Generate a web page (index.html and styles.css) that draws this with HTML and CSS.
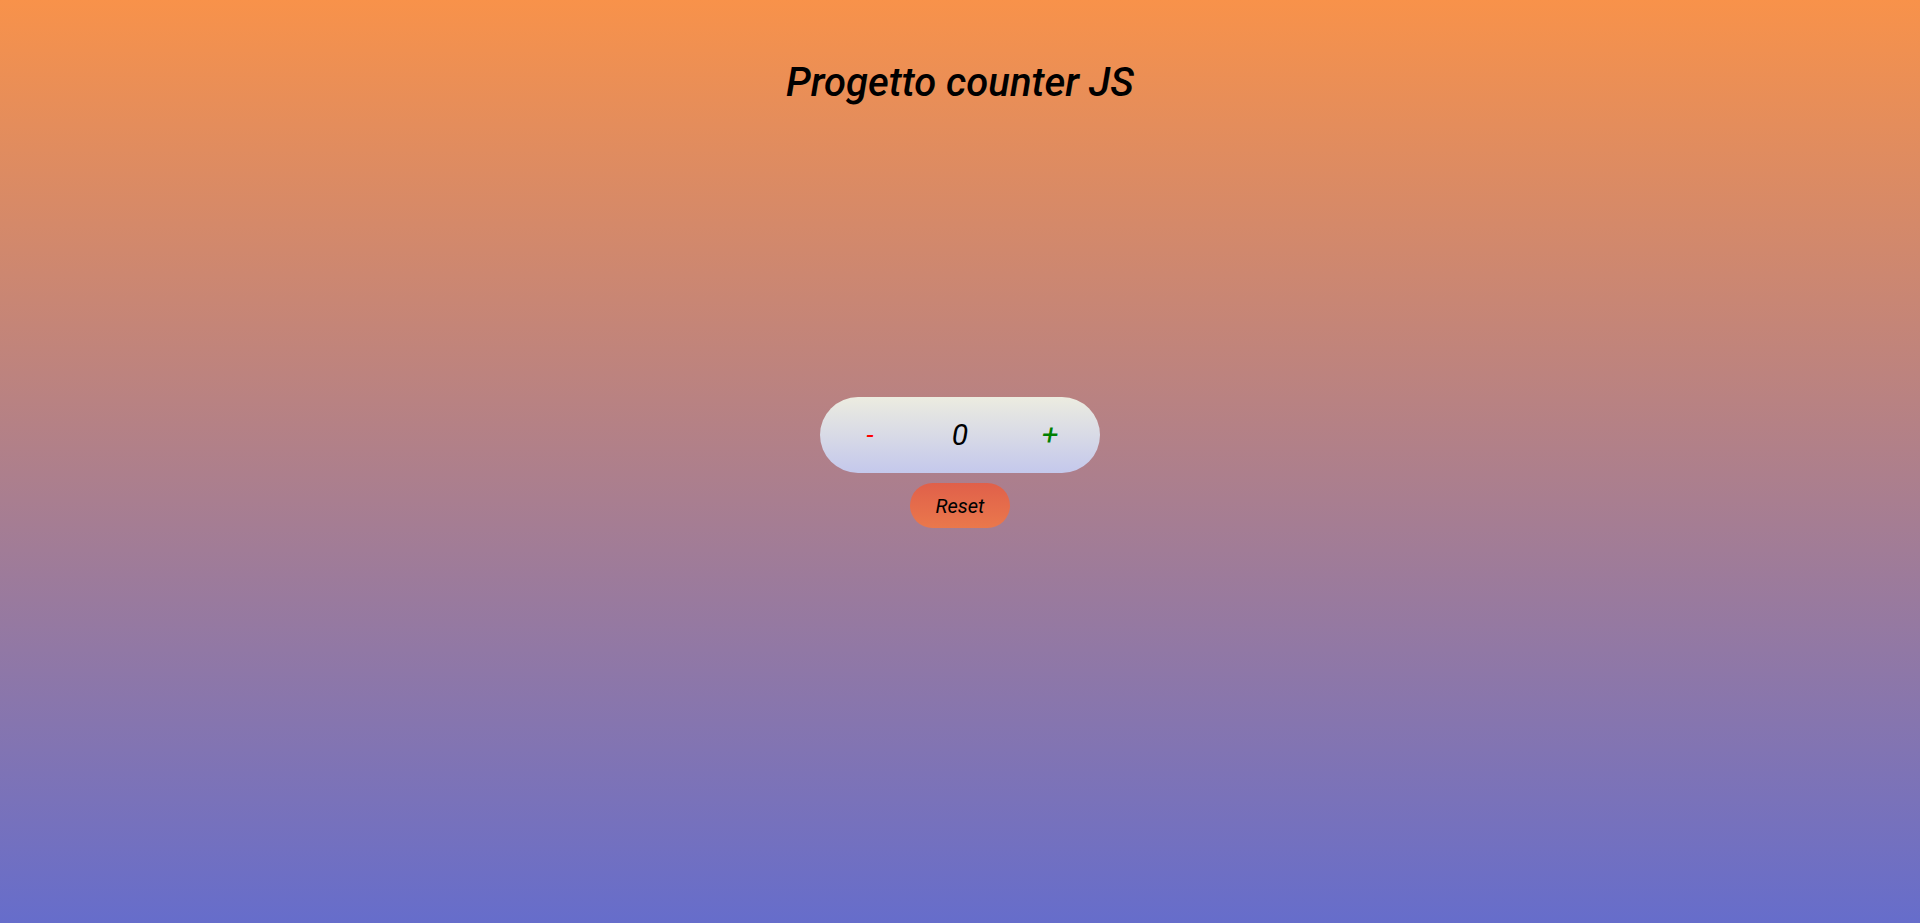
FILE: index.html
```html
<!DOCTYPE html>
<html lang="it">
<head>
<meta charset="utf-8">
<title>Progetto counter JS</title>
<link rel="stylesheet" href="styles.css">
</head>
<body>
<div class="page">
  <header class="top">
    <h1 class="title">Progetto counter JS</h1>
  </header>
  <main class="center">
    <div class="counter">
      <button class="btn minus">-</button>
      <span class="value">0</span>
      <button class="btn plus">+</button>
    </div>
    <button class="reset">Reset</button>
  </main>
  <div class="bottom"></div>
</div>
</body>
</html>
```
FILE: styles.css
```css
html, body {
  margin: 0;
  padding: 0;
  height: 100%;
}
body {
  background: linear-gradient(to bottom, #f8924a 0%, #666dcb 100%);
  font-family: Roboto, "Liberation Sans", sans-serif;
  font-style: italic;
  color: #000;
}
.page {
  height: 100vh;
  display: grid;
  grid-template-rows: 1fr auto 1fr;
}
.top {
  display: flex;
  justify-content: center;
  align-items: flex-start;
}
.title {
  margin: 59px 0 0;
  font-size: 40px;
  font-weight: 500;
  font-style: italic;
  line-height: 47px;
}
.center {
  display: flex;
  flex-direction: column;
  align-items: center;
  gap: 10px;
  padding-top: 2px;
}
.counter {
  width: 280px;
  height: 76px;
  box-sizing: border-box;
  border-radius: 38px;
  background: linear-gradient(to bottom, #ecece0 0%, #c4c8ec 100%);
  display: grid;
  grid-template-columns: 90px 90px 90px;
  padding: 0 5px;
  align-items: center;
  justify-items: center;
}
.btn {
  border: none;
  background: none;
  padding: 0;
  font-family: Roboto, "Liberation Sans", sans-serif;
  font-style: italic;
  font-size: 30px;
  line-height: 1;
  cursor: pointer;
}
.minus { color: #ff0000; font-size: 26px; }
.plus { color: #008000; }
.value {
  font-size: 30px;
  line-height: 1;
}
.reset {
  width: 100px;
  height: 45px;
  border: none;
  border-radius: 23px;
  background: linear-gradient(to bottom, #e0604a 0%, #ea784c 100%);
  font-family: Roboto, "Liberation Sans", sans-serif;
  font-style: italic;
  font-size: 20px;
  color: #000;
  padding: 0;
  cursor: pointer;
}
```
